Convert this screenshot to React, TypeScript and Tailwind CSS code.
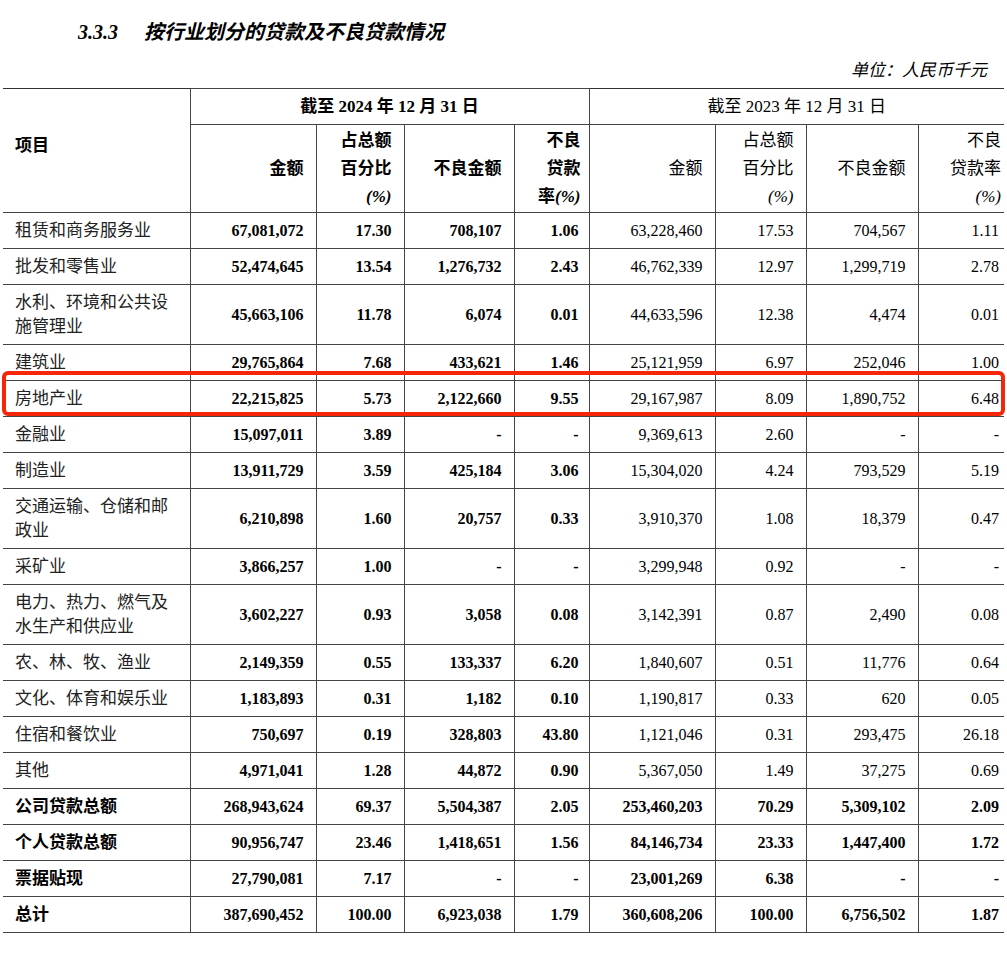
import React from "react";

type Row = { n: string; v: string[]; two?: boolean; b?: boolean };
const rows: Row[] = [
  { n: "租赁和商务服务业", v: ["67,081,072", "17.30", "708,107", "1.06", "63,228,460", "17.53", "704,567", "1.11"] },
  { n: "批发和零售业", v: ["52,474,645", "13.54", "1,276,732", "2.43", "46,762,339", "12.97", "1,299,719", "2.78"] },
  { n: "水利、环境和公共设施管理业", two: true, v: ["45,663,106", "11.78", "6,074", "0.01", "44,633,596", "12.38", "4,474", "0.01"] },
  { n: "建筑业", v: ["29,765,864", "7.68", "433,621", "1.46", "25,121,959", "6.97", "252,046", "1.00"] },
  { n: "房地产业", v: ["22,215,825", "5.73", "2,122,660", "9.55", "29,167,987", "8.09", "1,890,752", "6.48"] },
  { n: "金融业", v: ["15,097,011", "3.89", "-", "-", "9,369,613", "2.60", "-", "-"] },
  { n: "制造业", v: ["13,911,729", "3.59", "425,184", "3.06", "15,304,020", "4.24", "793,529", "5.19"] },
  { n: "交通运输、仓储和邮政业", two: true, v: ["6,210,898", "1.60", "20,757", "0.33", "3,910,370", "1.08", "18,379", "0.47"] },
  { n: "采矿业", v: ["3,866,257", "1.00", "-", "-", "3,299,948", "0.92", "-", "-"] },
  { n: "电力、热力、燃气及水生产和供应业", two: true, v: ["3,602,227", "0.93", "3,058", "0.08", "3,142,391", "0.87", "2,490", "0.08"] },
  { n: "农、林、牧、渔业", v: ["2,149,359", "0.55", "133,337", "6.20", "1,840,607", "0.51", "11,776", "0.64"] },
  { n: "文化、体育和娱乐业", v: ["1,183,893", "0.31", "1,182", "0.10", "1,190,817", "0.33", "620", "0.05"] },
  { n: "住宿和餐饮业", v: ["750,697", "0.19", "328,803", "43.80", "1,121,046", "0.31", "293,475", "26.18"] },
  { n: "其他", v: ["4,971,041", "1.28", "44,872", "0.90", "5,367,050", "1.49", "37,275", "0.69"] },
  { n: "公司贷款总额", b: true, v: ["268,943,624", "69.37", "5,504,387", "2.05", "253,460,203", "70.29", "5,309,102", "2.09"] },
  { n: "个人贷款总额", b: true, v: ["90,956,747", "23.46", "1,418,651", "1.56", "84,146,734", "23.33", "1,447,400", "1.72"] },
  { n: "票据贴现", b: true, v: ["27,790,081", "7.17", "-", "-", "23,001,269", "6.38", "-", "-"] },
  { n: "总计", b: true, v: ["387,690,452", "100.00", "6,923,038", "1.79", "360,608,206", "100.00", "6,756,502", "1.87"] },
];

const F = { fontFamily: '"Liberation Serif","Noto Sans CJK SC",serif' };
const B = "border border-[#333]";

export default function App() {
  return (
    <div className="w-[1007px] h-[957px] bg-white text-black relative" style={F}>
      <div className="pt-[17px] pl-[78px] text-[20px] font-bold italic h-[58px] flex items-start">
        <span className="mr-[26px]">3.3.3</span>
        <span>按行业划分的贷款及不良贷款情况</span>
      </div>
      <div className="text-right pr-[20px] italic text-[17px] h-[30px]">单位：人民币千元</div>
      <div className="relative px-[3px]">
        <table className="border-collapse table-fixed w-[1001px] text-[16px] [&_td]:border-[#444] [&_th]:border-[#444]">
          <colgroup>
            <col className="w-[187px]" /><col className="w-[126px]" /><col className="w-[88px]" /><col className="w-[110px]" />
            <col className="w-[75px]" /><col className="w-[126px]" /><col className="w-[91px]" /><col className="w-[112px]" /><col className="w-[86px]" />
          </colgroup>
          <thead className="text-[17px]">
            <tr className="h-[36px] border-t border-[#333]">
              <th rowSpan={2} className="border-b border-r border-[#444] text-left align-top pt-[44px] pl-[12px] font-bold">项目</th>
              <th colSpan={4} className={`${B} font-bold`}>截至 2024 年 12 月 31 日</th>
              <th colSpan={4} className="border-b border-l border-[#444] font-normal">截至 2023 年 12 月 31 日</th>
            </tr>
            <tr className="h-[88px] leading-[28px]">
              <th className={`${B} text-right pr-[12px] font-bold`}>金额</th>
              <th className={`${B} text-right pr-[12px] font-bold`}>占总额<br />百分比<br /><i>(%)</i></th>
              <th className={`${B} text-right pr-[12px] font-bold`}>不良金额</th>
              <th className={`${B} text-right pr-[8px] font-bold`}>不良<br />贷款<br />率<i>(%)</i></th>
              <th className={`${B} text-right pr-[12px] font-normal`}>金额</th>
              <th className={`${B} text-right pr-[12px] font-normal`}>占总额<br />百分比<br /><i>(%)</i></th>
              <th className={`${B} text-right pr-[12px] font-normal`}>不良金额</th>
              <th className="border-y border-l border-[#444] text-right pr-[3px] font-normal">不良<br />贷款率<br /><i>(%)</i></th>
            </tr>
          </thead>
          <tbody>
            {rows.map((r) => (
              <tr key={r.n} className={r.two ? "h-[60px]" : "h-[36px]"}>
                <td className={`border-y border-r border-[#444] pl-[12px] pr-[8px] text-[17px] leading-[24px] text-[#222] ${r.b ? "font-bold text-black" : ""}`}>{r.n}</td>
                {r.v.map((x, i) => (
                  <td key={i} className={`${i === 7 ? "border-y border-l border-[#444]" : B} text-right ${i === 3 ? "pr-[10px]" : i === 7 ? "pr-[5px]" : "pr-[12px]"} ${i < 4 || r.b ? "font-bold" : ""}`}>{x}</td>
                ))}
              </tr>
            ))}
          </tbody>
        </table>
        <div className="absolute left-[2px] top-[283px] w-[1003px] h-[45px] border-[4px] border-[#f5260a] rounded-[6px] pointer-events-none" />
      </div>
    </div>
  );
}
